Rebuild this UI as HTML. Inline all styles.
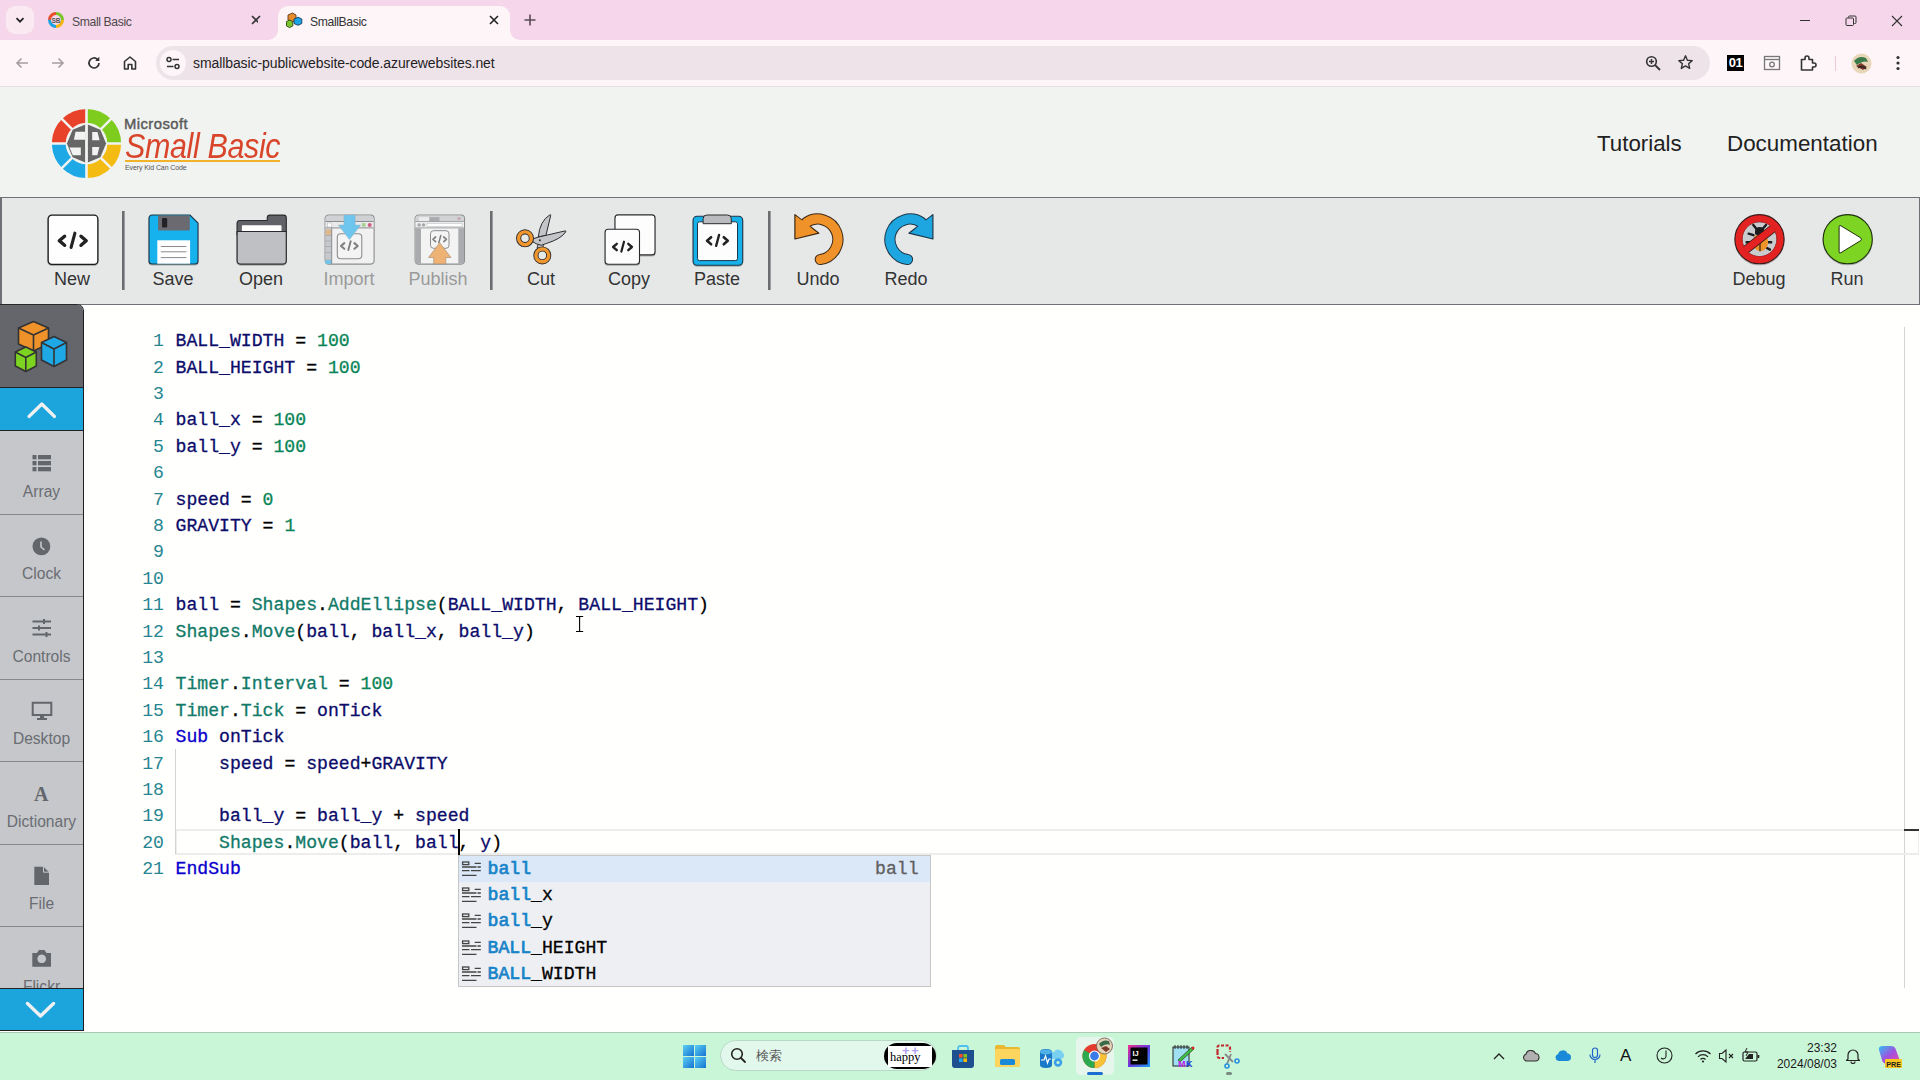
<!DOCTYPE html>
<html><head><meta charset="utf-8">
<style>
*{margin:0;padding:0;box-sizing:border-box}
html,body{width:1920px;height:1080px;overflow:hidden;background:#fffffe;font-family:"Liberation Sans",sans-serif}
.a{position:absolute}
#tabs{left:0;top:0;width:1920px;height:40px;background:#f6d6ea}
#bar{left:0;top:40px;width:1920px;height:47px;background:#fdf5f8;border-bottom:1px solid #e6dfe1}
#omni{left:156px;top:46px;width:1554px;height:34px;border-radius:17px;background:#efe3ea}
#hdr{left:0;top:87px;width:1920px;height:110px;background:#f1f3f1}
#tb{left:0;top:197px;width:1920px;height:108px;background:#e6e8e8;border:1px solid #6e7175;border-width:1px 1px 1px 2px}
.btn{position:absolute;top:214px;width:90px;text-align:center}
.lbl{position:absolute;top:269px;font-size:18px;color:#333;text-align:center;width:100px}
.sl{position:absolute;left:0;width:83px;text-align:center;color:#6a6d72;font-size:15.6px;line-height:18px}
#ed{left:84px;top:305px;width:1836px;height:726px;background:#fffffe}
.ln{position:absolute;left:120px;width:44px;text-align:right;font-family:"Liberation Mono",monospace;font-size:18.15px;color:#268590;line-height:26.4px;height:26.4px}
.cl{position:absolute;left:175.5px;font-family:"Liberation Mono",monospace;font-size:18.15px;color:#0c0c6a;line-height:26.4px;height:26.4px;white-space:pre;-webkit-text-stroke:0.3px currentColor}
.k{color:#0a00cc}.n{color:#0a8556}.t{color:#127a68}.p{color:#000}
</style></head><body>
<div id="tabs" class="a"></div>
<div id="bar" class="a"></div>
<div id="omni" class="a"></div>

<!-- chrome tabs -->
<div class="a" style="left:6px;top:6px;width:28px;height:28px;border-radius:9px;background:#fbe9f2"></div>
<svg class="a" style="left:14px;top:14px" width="12" height="12" viewBox="0 0 12 12"><path d="M2.5 4.2 L6 7.7 L9.5 4.2" fill="none" stroke="#222" stroke-width="1.7"/></svg>
<svg class="a" style="left:48px;top:12px" width="16" height="16" viewBox="0 0 16 16">
<circle cx="8" cy="8" r="6.5" fill="none" stroke="#e8502c" stroke-width="3" stroke-dasharray="10.2 30" transform="rotate(180 8 8)"/>
<circle cx="8" cy="8" r="6.5" fill="none" stroke="#7cc42b" stroke-width="3" stroke-dasharray="10.2 30" transform="rotate(270 8 8)"/>
<circle cx="8" cy="8" r="6.5" fill="none" stroke="#f5b50f" stroke-width="3" stroke-dasharray="10.2 30" transform="rotate(0 8 8)"/>
<circle cx="8" cy="8" r="6.5" fill="none" stroke="#1ba4e4" stroke-width="3" stroke-dasharray="10.2 30" transform="rotate(90 8 8)"/>
<text x="8" y="10.5" font-size="6.5" text-anchor="middle" fill="#555" font-family="Liberation Sans" font-weight="bold">SB</text>
</svg>
<div class="a" style="left:72px;top:14px;font-size:12.2px;color:#4e4a4c;line-height:16px;letter-spacing:-0.38px">Small Basic</div>
<svg class="a" style="left:250px;top:14px" width="12" height="12" viewBox="0 0 12 12"><path d="M2 2L10 10M10 2L2 10" stroke="#333" stroke-width="1.6"/></svg>
<!-- active tab -->
<div class="a" style="left:278px;top:6px;width:232px;height:40px;background:#fdf5f8;border-radius:10px 10px 0 0"></div>
<div class="a" style="left:268px;top:30px;width:10px;height:10px;background:#fdf5f8"></div>
<div class="a" style="left:258px;top:20px;width:20px;height:20px;background:#f6d6ea;border-radius:0 0 10px 0"></div>
<div class="a" style="left:510px;top:30px;width:10px;height:10px;background:#fdf5f8"></div>
<div class="a" style="left:510px;top:20px;width:20px;height:20px;background:#f6d6ea;border-radius:0 0 0 10px"></div>
<svg class="a" style="left:285px;top:11px" width="18" height="18" viewBox="0 0 18 18">
<path d="M3 4 L7.5 2 L11 4 L11 9 L6.5 11 L3 9Z" fill="#e98a2c" stroke="#5a3a1a" stroke-width="0.9"/>
<path d="M9 8 L13 6.2 L16.8 8 L16.8 12.5 L13 14.3 L9 12.5Z" fill="#1ba4e4" stroke="#1a3b5a" stroke-width="0.9"/>
<path d="M1.5 10.5 L4.5 9 L7.8 10.5 L7.8 15 L4.5 16.6 L1.5 15Z" fill="#7cc42b" stroke="#2a4a1a" stroke-width="0.9"/>
</svg>
<div class="a" style="left:310px;top:14px;font-size:12.2px;color:#333;line-height:16px;letter-spacing:-0.38px">SmallBasic</div>
<svg class="a" style="left:488px;top:14px" width="12" height="12" viewBox="0 0 12 12"><path d="M2 2L10 10M10 2L2 10" stroke="#222" stroke-width="1.6"/></svg>
<svg class="a" style="left:523px;top:13px" width="14" height="14" viewBox="0 0 14 14"><path d="M7 1.5V12.5M1.5 7H12.5" stroke="#5a4a55" stroke-width="1.6"/></svg>
<!-- window controls -->
<div class="a" style="left:1800px;top:20px;width:10px;height:1px;background:#333"></div>
<svg class="a" style="left:1844px;top:14px" width="14" height="14" viewBox="0 0 14 14"><rect x="2" y="4" width="7.5" height="7.5" rx="1" fill="none" stroke="#333" stroke-width="1"/><path d="M4.5 3.5V2.8A1 1 0 0 1 5.5 2H11A1 1 0 0 1 12 3V8.5A1 1 0 0 1 11 9.5H10.3" fill="none" stroke="#333" stroke-width="1"/></svg>
<svg class="a" style="left:1890px;top:14px" width="14" height="14" viewBox="0 0 14 14"><path d="M2 2L12 12M12 2L2 12" stroke="#333" stroke-width="1.1"/></svg>
<!-- toolbar icons -->
<svg class="a" style="left:14px;top:55px" width="16" height="16" viewBox="0 0 16 16"><path d="M14 8H3M7.5 3.5L3 8L7.5 12.5" fill="none" stroke="#a49ea1" stroke-width="1.6"/></svg>
<svg class="a" style="left:50px;top:55px" width="16" height="16" viewBox="0 0 16 16"><path d="M2 8H13M8.5 3.5L13 8L8.5 12.5" fill="none" stroke="#a49ea1" stroke-width="1.6"/></svg>
<svg class="a" style="left:86px;top:55px" width="16" height="16" viewBox="0 0 16 16"><path d="M13 8A5 5 0 1 1 11.5 4.4" fill="none" stroke="#333" stroke-width="1.7"/><path d="M13.3 1.8V6H9.1Z" fill="#333"/></svg>
<svg class="a" style="left:122px;top:55px" width="16" height="16" viewBox="0 0 16 16"><path d="M2.5 14V6.5L8 2L13.5 6.5V14H9.8V9.5H6.2V14Z" fill="none" stroke="#333" stroke-width="1.6" stroke-linejoin="round"/></svg>
<div class="a" style="left:160px;top:50px;width:26px;height:26px;border-radius:13px;background:#fdf5f8"></div>
<svg class="a" style="left:164px;top:54px" width="18" height="18" viewBox="0 0 18 18"><circle cx="5" cy="5.5" r="2" fill="none" stroke="#333" stroke-width="1.5"/><path d="M8.5 5.5H15" stroke="#333" stroke-width="1.5"/><circle cx="13" cy="12.5" r="2" fill="none" stroke="#333" stroke-width="1.5"/><path d="M3 12.5H9.5" stroke="#333" stroke-width="1.5"/></svg>
<div class="a" style="left:193px;top:54px;font-size:14px;color:#1f1f1f;line-height:18px;letter-spacing:-0.09px">smallbasic-publicwebsite-code.azurewebsites.net</div>
<svg class="a" style="left:1645px;top:55px" width="17" height="17" viewBox="0 0 17 17"><circle cx="6.5" cy="6.5" r="4.8" fill="none" stroke="#333" stroke-width="1.6"/><path d="M10 10L15 15" stroke="#333" stroke-width="1.8"/><path d="M6.5 4V9M4 6.5H9" stroke="#333" stroke-width="1.4"/></svg>
<svg class="a" style="left:1677px;top:54px" width="17" height="17" viewBox="0 0 17 17"><path d="M8.5 1.8L10.4 6.2L15.2 6.6L11.6 9.7L12.7 14.4L8.5 11.9L4.3 14.4L5.4 9.7L1.8 6.6L6.6 6.2Z" fill="none" stroke="#333" stroke-width="1.4" stroke-linejoin="round"/></svg>
<div class="a" style="left:1727px;top:55px;width:17px;height:16px;background:#000;color:#fff;font-size:13px;font-weight:bold;line-height:16px;text-align:center;letter-spacing:-0.5px">01</div>
<svg class="a" style="left:1763px;top:55px" width="18" height="16" viewBox="0 0 18 16"><rect x="1.5" y="1.5" width="15" height="13" fill="none" stroke="#777" stroke-width="1.3"/><path d="M1.5 4.5H16.5" stroke="#777" stroke-width="1.3"/><circle cx="9" cy="9.5" r="2.3" fill="none" stroke="#777" stroke-width="1.3"/></svg>
<svg class="a" style="left:1799px;top:54px" width="18" height="18" viewBox="0 0 18 18"><path d="M2.5 5.5H6V4A2 2 0 0 1 10 4V5.5H13.5V9H15A2 2 0 0 1 15 13H13.5V16H2.5Z" fill="none" stroke="#333" stroke-width="1.6" stroke-linejoin="round"/></svg>
<div class="a" style="left:1835px;top:56px;width:1px;height:15px;background:#f0c8dc"></div>
<svg class="a" style="left:1851px;top:53px" width="21" height="21" viewBox="0 0 21 21"><circle cx="10.5" cy="10.5" r="10" fill="#e9d6b8"/><path d="M3 8Q8 2 15 5L17 9Q12 7 6 12Z" fill="#3b7a4a"/><path d="M5 13L10 10L16 14L12 17Z" fill="#7a3a2a"/><path d="M7 15Q11 12 15 16" stroke="#222" stroke-width="1.2" fill="none"/></svg>
<svg class="a" style="left:1892px;top:55px" width="12" height="16" viewBox="0 0 12 16"><circle cx="6" cy="2.5" r="1.6" fill="#333"/><circle cx="6" cy="8" r="1.6" fill="#333"/><circle cx="6" cy="13.5" r="1.6" fill="#333"/></svg>

<div id="hdr" class="a"></div>

<svg class="a" style="left:52px;top:107px" width="72" height="74" viewBox="0 0 72 74">
<path d="M69.10 36.50A34.6 34.6 0 0 1 58.97 60.97L49.21 51.21A20.8 20.8 0 0 0 55.30 36.50Z" fill="#f4bb12"/><path d="M58.97 60.97A34.6 34.6 0 0 1 34.50 71.10L34.50 57.30A20.8 20.8 0 0 0 49.21 51.21Z" fill="#f4bb12"/><path d="M34.50 71.10A34.6 34.6 0 0 1 10.03 60.97L19.79 51.21A20.8 20.8 0 0 0 34.50 57.30Z" fill="#1ea8e6"/><path d="M10.03 60.97A34.6 34.6 0 0 1 -0.10 36.50L13.70 36.50A20.8 20.8 0 0 0 19.79 51.21Z" fill="#1ea8e6"/><path d="M-0.10 36.50A34.6 34.6 0 0 1 10.03 12.03L19.79 21.79A20.8 20.8 0 0 0 13.70 36.50Z" fill="#e8432a"/><path d="M10.03 12.03A34.6 34.6 0 0 1 34.50 1.90L34.50 15.70A20.8 20.8 0 0 0 19.79 21.79Z" fill="#e8432a"/><path d="M34.50 1.90A34.6 34.6 0 0 1 58.97 12.03L49.21 21.79A20.8 20.8 0 0 0 34.50 15.70Z" fill="#7dcc1e"/><path d="M58.97 12.03A34.6 34.6 0 0 1 69.10 36.50L55.30 36.50A20.8 20.8 0 0 0 49.21 21.79Z" fill="#7dcc1e"/><path d="M72.56 36.50L-3.56 36.50" stroke="#f1f3f1" stroke-width="2.6"/><path d="M61.41 63.41L7.59 9.59" stroke="#f1f3f1" stroke-width="2.6"/><path d="M34.50 74.56L34.50 -1.56" stroke="#f1f3f1" stroke-width="2.6"/><path d="M7.59 63.41L61.41 9.59" stroke="#f1f3f1" stroke-width="2.6"/>
<polygon points="54.10,36.50 48.36,50.36 34.50,56.10 20.64,50.36 14.90,36.50 20.64,22.64 34.50,16.90 48.36,22.64" fill="#666"/>
<path d="M33.1 16V57M35.9 16V57" stroke="#f1f3f1" stroke-width="0"/>
<rect x="33.1" y="16" width="2.8" height="41" fill="#f1f3f1"/>
<polygon points="23.5,24.7 33.1,24.7 33.1,32.8 21.9,32.8" fill="#f1f3f1"/>
<polygon points="17.5,40.5 28.8,40.5 28.8,48.3 20.8,48.3" fill="#f1f3f1"/>
<polygon points="40.2,25 45.5,25 47.6,33.3 40.2,33.3" fill="#f1f3f1"/>
<polygon points="40.2,40 47.4,40 45.3,48.3 40.2,48.3" fill="#f1f3f1"/>
</svg>
<div class="a" style="left:124px;top:115px;font-size:14.8px;color:#5a5a5a;line-height:18px;letter-spacing:0.45px;-webkit-text-stroke:0.45px #5a5a5a">Microsoft</div>
<div class="a" style="left:125px;top:126px;font-family:'Liberation Sans',sans-serif;font-style:italic;font-size:35px;color:#d9452a;line-height:40px;letter-spacing:-0.4px;transform:scaleX(0.87);transform-origin:0 0">Small Basic</div>
<div class="a" style="left:125px;top:160px;width:155px;height:2px;background:#f0b32a"></div>
<div class="a" style="left:125px;top:163px;font-size:7px;color:#555;line-height:9px;letter-spacing:-0.1px">Every Kid Can Code</div>
<div class="a" style="left:1597px;top:131px;font-size:22.3px;color:#212121;line-height:26px">Tutorials</div>
<div class="a" style="left:1727px;top:131px;font-size:22.4px;color:#212121;line-height:26px">Documentation</div>

<div id="tb" class="a"></div>
<svg class="a" style="left:0;top:197px" width="1920" height="108" viewBox="0 197 1920 108">
<defs>
<g id="code"><path d="M5.6 -4.6 L0.3 0 L5.6 4.5" fill="none" stroke="#222" stroke-width="3.4" stroke-linecap="round" stroke-linejoin="round"/><path d="M22 -4.6 L27.2 0 L22 4.5" fill="none" stroke="#222" stroke-width="3.4" stroke-linecap="round" stroke-linejoin="round"/><path d="M15.9 -7.6 L12.1 6.6" stroke="#222" stroke-width="3.1" stroke-linecap="round"/></g>
<filter id="sh" x="-10%" y="-10%" width="120%" height="130%"><feDropShadow dx="0" dy="1" stdDeviation="0.7" flood-color="#000" flood-opacity="0.25"/></filter>
</defs>
<!-- New -->
<g transform="translate(47.5 214.5)" filter="url(#sh)">
<rect x="0.65" y="0.65" width="49.7" height="49.2" rx="3.6" fill="#fefefe" stroke="#1a1a1a" stroke-width="1.3"/>
<use href="#code" transform="translate(11.5 26.3)"/>
</g>
<!-- Save -->
<g transform="translate(148.5 214.5)" filter="url(#sh)">
<path d="M3.5 0.5 H41.5 L49.5 8.5 V46.5 A3 3 0 0 1 46.5 49.5 H3.5 A3 3 0 0 1 0.5 46.5 V3.5 A3 3 0 0 1 3.5 0.5Z" fill="#17b2ee" stroke="#1d3748" stroke-width="1.1"/>
<path d="M9.6 1 H41.3 V14.5 A1.5 1.5 0 0 1 39.8 16 H11.1 A1.5 1.5 0 0 1 9.6 14.5Z" fill="#6b6b70"/>
<rect x="13.5" y="3.4" width="5.2" height="9.5" rx="1" fill="#232325"/>
<rect x="8.8" y="25.8" width="32.8" height="23.4" fill="#fff"/>
<path d="M12.3 32H37.9M12.3 37.3H37.9M12.3 43.1H37.9" stroke="#8a8a8a" stroke-width="1"/>
</g>
<!-- Open -->
<g transform="translate(236.5 214.5)" filter="url(#sh)">
<path d="M0.6 8.5 A2.5 2.5 0 0 1 3.1 6 H30.8 V3 A2.5 2.5 0 0 1 33.3 0.6 H47.3 A2.5 2.5 0 0 1 49.8 3 V20 H0.6Z" fill="#606268" stroke="#2b2b2e" stroke-width="1.1"/>
<rect x="5.4" y="10.8" width="39.6" height="7" rx="0.8" fill="#fff"/>
<path d="M0.6 17 H49.8 V46.5 A3 3 0 0 1 46.8 49.6 H3.6 A3 3 0 0 1 0.6 46.5Z" fill="#bfc0c4" stroke="#2b2b2e" stroke-width="1.2"/>
</g>
<!-- Import -->
<g transform="translate(324.5 214.5)">
<rect x="0.6" y="0.6" width="49" height="49" rx="3.5" fill="#f1f1f1" stroke="#8b8d90" stroke-width="1.1"/>
<path d="M1 4 A3 3 0 0 1 4 1 H46 A3 3 0 0 1 49 4 V7 H1Z" fill="#cfd1d4"/>
<path d="M1 7H49" stroke="#8b8d90" stroke-width="1"/>
<rect x="1" y="7.5" width="48" height="5.8" fill="#eaeaea"/>
<path d="M1 13.4H49" stroke="#8b8d90" stroke-width="1"/>
<rect x="3" y="8.5" width="4" height="4" fill="#fff" stroke="#b0b0b0" stroke-width="0.5"/>
<rect x="37.4" y="8.6" width="3.6" height="3.6" fill="#a9cf92"/>
<circle cx="45.2" cy="10.4" r="2" fill="#d05c80"/>
<rect x="1" y="13.8" width="6.2" height="35.2" fill="#c5c8cd"/>
<path d="M1 21H7.2M1 26.5H7.2M1 32H7.2M1 38H7.2M1 45.5H7.2" stroke="#9a9da2" stroke-width="0.6"/>
<rect x="1" y="45.8" width="6.2" height="3.5" fill="#6cc3e8"/>
<rect x="1.2" y="15" width="5.5" height="5.5" fill="#e8b070" opacity="0.7"/>
<path d="M7.2 13.4V49.4" stroke="#8b8d90" stroke-width="1"/>
<rect x="12.8" y="19.2" width="24.5" height="25" rx="3.5" fill="#f4f4f4" stroke="#8b8d90" stroke-width="1.1"/>
<g transform="translate(25 31.5) scale(0.62)"><use href="#code" transform="translate(-14 0)" style="opacity:0.55"/></g>
<path d="M19.5 0.6 H30.6 V10.6 H36 L25 25 L14 10.6 H19.5Z" fill="#6ec6ee" stroke="#8ab4c8" stroke-width="0.6"/>
</g>
<!-- Publish -->
<g transform="translate(414.5 214.5)">
<rect x="0.6" y="0.6" width="49.4" height="49" rx="3.5" fill="#f3f3f3" stroke="#8b8d90" stroke-width="1.1"/>
<path d="M1 4 A3 3 0 0 1 4 1 H46.5 A3 3 0 0 1 49.5 4 V7 H1Z" fill="#d0d2d4"/>
<rect x="4.4" y="2.6" width="10.4" height="4.4" fill="#ececec"/>
<rect x="14.8" y="2.6" width="10.2" height="4.4" fill="#a9abaf"/>
<circle cx="44.5" cy="4" r="1.6" fill="#c9a8b0"/>
<path d="M1 7H49.5" stroke="#8b8d90" stroke-width="0.8"/>
<rect x="1" y="7.4" width="48.5" height="6" fill="#ededed"/>
<circle cx="4.6" cy="10.4" r="1.7" fill="#a6a8ac"/><circle cx="9" cy="10.4" r="1.7" fill="#a6a8ac"/>
<rect x="12.5" y="9.2" width="35" height="2.6" fill="#fff" stroke="#b8babd" stroke-width="0.5"/>
<path d="M1 13.4H49.5" stroke="#8b8d90" stroke-width="0.8"/>
<rect x="1" y="13.8" width="5.5" height="35.3" fill="#a9abae"/>
<rect x="43.8" y="13.8" width="5.7" height="35.3" fill="#a9abae"/>
<rect x="16" y="16.2" width="18.5" height="17.6" rx="3" fill="#f4f4f4" stroke="#8b8d90" stroke-width="1"/>
<g transform="translate(25.3 24.8) scale(0.5)"><use href="#code" transform="translate(-14 0)" style="opacity:0.55"/></g>
<path d="M25.2 28.2 L36.5 43 H31.3 V49.4 H19.2 V43 H14Z" fill="#eeb275" stroke="#a08a70" stroke-width="0.6"/>
</g>
<!-- Cut -->
<g transform="translate(516.3 214.3)">
<path d="M21.8 29.5 L20.8 33.5 L27 34 L26.8 29Z" fill="#c4c5c9" stroke="#2b2b2e" stroke-width="0.9" stroke-linejoin="round"/>
<path d="M22 22.6 Q23.5 6.5 33.8 0.4 Q34.6 0.2 34.4 1.2 L29.6 21.2 Z" fill="#c4c5c9" stroke="#2b2b2e" stroke-width="1" stroke-linejoin="round"/>
<path d="M16.5 24.5 L23 22.6 L48.8 16.6 Q50 16.6 49.4 17.6 Q45 24.5 30 29.2 L25 31 Q20 30 16.5 27.5Z" fill="#c4c5c9" stroke="#2b2b2e" stroke-width="1" stroke-linejoin="round"/>
<circle cx="8.7" cy="24" r="6.4" fill="none" stroke="#2b2b2e" stroke-width="5.2"/>
<circle cx="8.7" cy="24" r="6.4" fill="none" stroke="#f0962c" stroke-width="3.4"/>
<circle cx="26" cy="41.1" r="6.4" fill="none" stroke="#2b2b2e" stroke-width="5.2"/>
<circle cx="26" cy="41.1" r="6.4" fill="none" stroke="#f0962c" stroke-width="3.4"/>
<circle cx="23.6" cy="26" r="1" fill="#2b2b2e"/>
</g>
<!-- Copy -->
<g transform="translate(604.5 214.3)" filter="url(#sh)">
<rect x="10.5" y="0.6" width="40" height="40" rx="3" fill="#fdfdfd" stroke="#2b2b2e" stroke-width="1.1"/>
<rect x="0.6" y="15" width="34.4" height="35" rx="3" fill="#fdfdfd" stroke="#2b2b2e" stroke-width="1.1"/>
<g transform="translate(18 32.7) scale(0.7)"><use href="#code" transform="translate(-13.75 0)"/></g>
</g>
<!-- Paste -->
<g transform="translate(692.5 214.3)" filter="url(#sh)">
<rect x="0.6" y="2" width="49.6" height="49" rx="4" fill="#18b0ea" stroke="#1d3748" stroke-width="1.1"/>
<rect x="5" y="7.5" width="40" height="38.8" rx="2" fill="#fdfdfd" stroke="#1d3748" stroke-width="1"/>
<path d="M10.6 9.4 V4.5 A3.8 3.8 0 0 1 14.4 0.7 H35 A3.8 3.8 0 0 1 38.8 4.5 V9.4 Z" fill="#b9bbbf" stroke="#2b2b2e" stroke-width="1"/>
<g transform="translate(24.9 26.5) scale(0.77)"><use href="#code" transform="translate(-13.75 0)"/></g>
</g>
<!-- Undo -->
<g transform="translate(794.3 214)">
<path d="M12 8.5 A20.3 20.3 0 1 1 26 45.5" fill="none" stroke="#3d2a18" stroke-width="11.2" stroke-linecap="round"/>
<polygon points="0.6,0.6 0.6,25 24.6,19.2" fill="#f0922a" stroke="#3d2a18" stroke-width="1.2" stroke-linejoin="round"/>
<path d="M12 8.5 A20.3 20.3 0 1 1 26 45.5" fill="none" stroke="#f0922a" stroke-width="9.2" stroke-linecap="round"/>
<polygon points="2,2.5 1.8,23.5 21,18.2 14,11" fill="#f0922a"/>
</g>
<!-- Redo -->
<g transform="translate(933.5 214) scale(-1 1)">
<path d="M12 8.5 A20.3 20.3 0 1 1 26 45.5" fill="none" stroke="#1d3748" stroke-width="11.2" stroke-linecap="round"/>
<polygon points="0.6,0.6 0.6,25 24.6,19.2" fill="#1ea6e0" stroke="#1d3748" stroke-width="1.2" stroke-linejoin="round"/>
<path d="M12 8.5 A20.3 20.3 0 1 1 26 45.5" fill="none" stroke="#1ea6e0" stroke-width="9.2" stroke-linecap="round"/>
<polygon points="2,2.5 1.8,23.5 21,18.2 14,11" fill="#1ea6e0"/>
</g>
<!-- Debug -->
<clipPath id="dclip"><circle cx="0" cy="0" r="18"/></clipPath>
<g transform="translate(1759.5 239.2)" filter="url(#sh)">
<circle r="24.6" fill="#e52323" stroke="#3a1a1a" stroke-width="1.1"/>
<circle r="17.4" fill="#c9cbce" stroke="#3a1a1a" stroke-width="0.8"/>
<path d="M-2 -9 L-6.2 -14.2 M2 -9 L6.5 -14.2 M-6 -4 L-10.9 -5.5 M6 3 L11.7 3 M-7 3 L-12.9 3 M6 8 L10.5 10.4" stroke="#1c1c1c" stroke-width="2.4" stroke-linecap="round"/>
<ellipse cx="1" cy="3" rx="7.6" ry="9" fill="#f0952a"/>
<path d="M-4.5 -8.2 A4.8 4.8 0 0 1 5 -8.2 L5 -5 Q0 -3 -4.5 -5Z" fill="#1c1c1c"/>
<path d="M0.5 -4 V12" stroke="#3a2a1a" stroke-width="1.3"/>
<g clip-path="url(#dclip)">
<path d="M16 -12.6 L-16 12.4" stroke="#3a1a1a" stroke-width="8.6"/>
<path d="M16 -12.6 L-16 12.4" stroke="#e52323" stroke-width="7"/>
</g>
<circle r="17.6" fill="none" stroke="#e52323" stroke-width="0.9"/>
<path d="M13.5 -7.5 L-7.5 9" stroke="none"/>
</g>
<!-- Run -->
<g transform="translate(1847.7 239.2)" filter="url(#sh)">
<circle r="24.6" fill="#7dd420" stroke="#1f3010" stroke-width="1.1"/>
<path d="M-8.6 -12.5 Q-8.6 -14.5 -6.8 -13.4 L13 -1.4 Q14.5 0 13 1.4 L-6.8 13.5 Q-8.6 14.6 -8.6 12.5Z" fill="#fff" stroke="#1f3010" stroke-width="1"/>
</g>
<!-- separators -->
<rect x="122" y="211" width="2.6" height="79" fill="#6b6d70"/>
<rect x="490" y="211" width="2.6" height="79" fill="#6b6d70"/>
<rect x="768" y="211" width="2.6" height="79" fill="#6b6d70"/>
</svg>
<div class="lbl" style="left:22px">New</div>
<div class="lbl" style="left:123px">Save</div>
<div class="lbl" style="left:211px">Open</div>
<div class="lbl" style="left:299px;color:#9a9a9a">Import</div>
<div class="lbl" style="left:388px;color:#9a9a9a">Publish</div>
<div class="lbl" style="left:491px">Cut</div>
<div class="lbl" style="left:579px">Copy</div>
<div class="lbl" style="left:667px">Paste</div>
<div class="lbl" style="left:768px">Undo</div>
<div class="lbl" style="left:856px">Redo</div>
<div class="lbl" style="left:1709px">Debug</div>
<div class="lbl" style="left:1797px">Run</div>

<div class="a" style="left:0;top:304px;width:84px;height:727px;background:#c5c7cb;border-right:1px solid #1e1e1e;border-top:1px solid #2a2a2a;border-top-right-radius:7px;overflow:hidden">
<div class="a" style="left:0;top:0;width:83px;height:83px;background:#64666c;border-bottom:1px solid #222"></div>
<div class="a" style="left:0;top:83px;width:83px;height:43px;background:#1ba5dc;border-bottom:1px solid #222"></div>
<div class="a" style="left:0;top:209px;width:83px;height:1px;background:#85888d"></div>
<div class="a" style="left:0;top:291px;width:83px;height:1px;background:#85888d"></div>
<div class="a" style="left:0;top:374px;width:83px;height:1px;background:#85888d"></div>
<div class="a" style="left:0;top:456px;width:83px;height:1px;background:#85888d"></div>
<div class="a" style="left:0;top:539px;width:83px;height:1px;background:#85888d"></div>
<div class="a" style="left:0;top:621px;width:83px;height:1px;background:#85888d"></div>
<div class="sl" style="top:178px">Array</div>
<div class="sl" style="top:260px">Clock</div>
<div class="sl" style="top:343px">Controls</div>
<div class="sl" style="top:425px">Desktop</div>
<div class="sl" style="top:508px">Dictionary</div>
<div class="sl" style="top:590px">File</div>
<div class="sl" style="top:673px">Flickr</div>
<div class="a" style="left:0;top:683px;width:83px;height:43px;background:#1ba5dc;border-top:1px solid #222;border-bottom:1px solid #222"></div>
</div>
<svg class="a" style="left:0;top:305px" width="84" height="726" viewBox="0 305 84 726">
<g stroke="#333" stroke-width="1.6" stroke-linejoin="round">
<path d="M33.5 321.5 L48.5 328 L48.5 344 L33.5 351 L18.5 344 L18.5 328Z" fill="#f0922a"/>
<path d="M18.5 328 L33.5 335 L48.5 328 M33.5 335 V351" fill="none"/>
<path d="M54 336.5 L66.5 342.5 L66.5 360 L54 366.5 L41.5 360 L41.5 342.5Z" fill="#1ea8e6"/>
<path d="M41.5 342.5 L54 349 L66.5 342.5 M54 349 V366.5" fill="none"/>
<path d="M25.8 347 L36.3 352 L36.3 366 L25.8 371.5 L15.3 366 L15.3 352Z" fill="#7dd420"/>
<path d="M15.3 352 L25.8 357.5 L36.3 352 M25.8 357.5 V371.5" fill="none"/>
</g>
<path d="M29 416.5 L41.8 404 L54.5 416.5" fill="none" stroke="#eef0f2" stroke-width="3.2" stroke-linecap="round" stroke-linejoin="round"/>
<path d="M27.5 1003.5 L40.5 1016 L53.5 1003.5" fill="none" stroke="#eef0f2" stroke-width="3.4" stroke-linecap="round" stroke-linejoin="round"/>
<g fill="#63666b">
<!-- array -->
<rect x="32.5" y="455" width="4" height="4.3"/><rect x="38" y="455" width="13" height="4.3"/>
<rect x="32.5" y="461" width="4" height="4.3"/><rect x="38" y="461" width="13" height="4.3"/>
<rect x="32.5" y="467" width="4" height="4.3"/><rect x="38" y="467" width="13" height="4.3"/>
<!-- clock -->
<circle cx="41.4" cy="546.4" r="8.9"/>
</g>
<path d="M41 541.5 V547 L44.5 550" fill="none" stroke="#c5c7cb" stroke-width="1.6"/>
<g stroke="#63666b" stroke-width="2">
<path d="M32.5 621.5 H51 M32.5 628 H51 M32.5 634.5 H51"/>
</g>
<g fill="#63666b">
<rect x="43" y="619" width="2" height="5"/><rect x="38" y="625.5" width="2" height="5"/><rect x="45.5" y="632" width="2" height="5"/>
<!-- desktop -->
<path d="M31.7 701.7 H52.3 V716 H44 V718 H47 V720 H37 V718 H40 V716 H31.7Z M33.7 703.7 V714 H50.3 V703.7Z" fill-rule="evenodd"/>
<!-- file -->
<path d="M34.3 866.7 H43.5 L49 872.2 V885 H34.3Z"/>
<!-- camera -->
<path d="M32.3 953 H37 L39 950 H44.5 L46.5 953 H51 V966.7 H32.3Z M41.7 954.5 A4.3 4.3 0 1 0 41.71 954.5Z" fill-rule="evenodd"/>
</g>
<path d="M43.5 866.7 V872.2 H49" fill="none" stroke="#c5c7cb" stroke-width="1"/>
<circle cx="41.7" cy="959" r="3" fill="none" stroke="#c5c7cb" stroke-width="1.6"/>
<text x="41.3" y="800.7" font-family="Liberation Serif" font-weight="bold" font-size="20" text-anchor="middle" fill="#63666b">A</text>
</svg>

<div id="ed" class="a"></div>
<div class="ln" style="top:328.2px">1</div>
<div class="cl" style="top:328.2px"><span>BALL_WIDTH</span> <span class="p">=</span> <span class="n">100</span></div>
<div class="ln" style="top:354.6px">2</div>
<div class="cl" style="top:354.6px"><span>BALL_HEIGHT</span> <span class="p">=</span> <span class="n">100</span></div>
<div class="ln" style="top:381.0px">3</div>
<div class="ln" style="top:407.4px">4</div>
<div class="cl" style="top:407.4px">ball_x <span class="p">=</span> <span class="n">100</span></div>
<div class="ln" style="top:433.8px">5</div>
<div class="cl" style="top:433.8px">ball_y <span class="p">=</span> <span class="n">100</span></div>
<div class="ln" style="top:460.2px">6</div>
<div class="ln" style="top:486.6px">7</div>
<div class="cl" style="top:486.6px">speed <span class="p">=</span> <span class="n">0</span></div>
<div class="ln" style="top:513.0px">8</div>
<div class="cl" style="top:513.0px">GRAVITY <span class="p">=</span> <span class="n">1</span></div>
<div class="ln" style="top:539.4px">9</div>
<div class="ln" style="top:565.8px">10</div>
<div class="ln" style="top:592.2px">11</div>
<div class="cl" style="top:592.2px">ball <span class="p">=</span> <span class="t">Shapes</span><span class="p">.</span><span class="t">AddEllipse</span><span class="p">(</span>BALL_WIDTH<span class="p">,</span> BALL_HEIGHT<span class="p">)</span></div>
<div class="ln" style="top:618.6px">12</div>
<div class="cl" style="top:618.6px"><span class="t">Shapes</span><span class="p">.</span><span class="t">Move</span><span class="p">(</span>ball<span class="p">,</span> ball_x<span class="p">,</span> ball_y<span class="p">)</span></div>
<div class="ln" style="top:645.0px">13</div>
<div class="ln" style="top:671.4px">14</div>
<div class="cl" style="top:671.4px"><span class="t">Timer</span><span class="p">.</span><span class="t">Interval</span> <span class="p">=</span> <span class="n">100</span></div>
<div class="ln" style="top:697.8px">15</div>
<div class="cl" style="top:697.8px"><span class="t">Timer</span><span class="p">.</span><span class="t">Tick</span> <span class="p">=</span> onTick</div>
<div class="ln" style="top:724.2px">16</div>
<div class="cl" style="top:724.2px"><span class="k">Sub</span> onTick</div>
<div class="ln" style="top:750.6px">17</div>
<div class="cl" style="top:750.6px">    speed <span class="p">=</span> speed<span class="p">+</span>GRAVITY</div>
<div class="ln" style="top:777.0px">18</div>
<div class="ln" style="top:803.4px">19</div>
<div class="cl" style="top:803.4px">    ball_y <span class="p">=</span> ball_y <span class="p">+</span> speed</div>
<div class="ln" style="top:829.8px">20</div>
<div class="cl" style="top:829.8px">    <span class="t">Shapes</span><span class="p">.</span><span class="t">Move</span><span class="p">(</span>ball<span class="p">,</span> ball<span class="p">,</span> y<span class="p">)</span></div>
<div class="ln" style="top:856.2px">21</div>
<div class="cl" style="top:856.2px"><span class="k">EndSub</span></div>
<div class="a" style="left:1904px;top:327px;width:1px;height:661px;background:#d4d4d4"></div>
<div class="a" style="left:175px;top:829px;width:1744px;height:26px;border:2px solid #ededed;border-right-width:1px"></div>
<div class="a" style="left:175px;top:749px;width:1px;height:105px;background:#d3d3d3"></div>
<div class="a" style="left:1904px;top:829px;width:15px;height:2px;background:#333"></div>
<div class="a" style="left:458px;top:829px;width:2px;height:26px;background:#000"></div>
<svg class="a" style="left:574px;top:614px" width="12" height="20" viewBox="0 0 12 20"><path d="M2 2.5H5.2Q5.6 2.8 5.6 4V16Q5.6 17.2 5.2 17.5H2M9.2 2.5H6Q5.6 2.8 5.6 4V16Q5.6 17.2 6 17.5H9.2" fill="none" stroke="#000" stroke-width="1.1"/></svg>
<div class="a" style="left:458px;top:855px;width:473px;height:132px;background:#eeeff2;border:1px solid #c6c6c6"></div>
<div class="a" style="left:459px;top:856px;width:471px;height:26px;background:#dbe8f7"></div>

<svg class="a" style="left:461px;top:860.5px" width="21" height="17" viewBox="0 0 21 17"><g stroke="#444" stroke-width="1.3" fill="none"><rect x="1.6" y="1" width="6.2" height="2.6"/><path d="M13.7 2.3H19.8M1 6H15.5M16.5 6H19.8M1 9.7H8.5M10 9.7H19.8M1 14.3H15.5"/></g></svg>
<div class="cl" style="left:487.5px;top:855.5px;color:#000"><span style="color:#1783c9;-webkit-text-stroke:0.7px #1783c9">ball</span></div>
<svg class="a" style="left:461px;top:886.9px" width="21" height="17" viewBox="0 0 21 17"><g stroke="#444" stroke-width="1.3" fill="none"><rect x="1.6" y="1" width="6.2" height="2.6"/><path d="M13.7 2.3H19.8M1 6H15.5M16.5 6H19.8M1 9.7H8.5M10 9.7H19.8M1 14.3H15.5"/></g></svg>
<div class="cl" style="left:487.5px;top:881.9px;color:#000"><span style="color:#1783c9;-webkit-text-stroke:0.7px #1783c9">ball</span>_x</div>
<svg class="a" style="left:461px;top:913.3px" width="21" height="17" viewBox="0 0 21 17"><g stroke="#444" stroke-width="1.3" fill="none"><rect x="1.6" y="1" width="6.2" height="2.6"/><path d="M13.7 2.3H19.8M1 6H15.5M16.5 6H19.8M1 9.7H8.5M10 9.7H19.8M1 14.3H15.5"/></g></svg>
<div class="cl" style="left:487.5px;top:908.3px;color:#000"><span style="color:#1783c9;-webkit-text-stroke:0.7px #1783c9">ball</span>_y</div>
<svg class="a" style="left:461px;top:939.7px" width="21" height="17" viewBox="0 0 21 17"><g stroke="#444" stroke-width="1.3" fill="none"><rect x="1.6" y="1" width="6.2" height="2.6"/><path d="M13.7 2.3H19.8M1 6H15.5M16.5 6H19.8M1 9.7H8.5M10 9.7H19.8M1 14.3H15.5"/></g></svg>
<div class="cl" style="left:487.5px;top:934.7px;color:#000"><span style="color:#1783c9;-webkit-text-stroke:0.7px #1783c9">BALL</span>_HEIGHT</div>
<svg class="a" style="left:461px;top:966.1px" width="21" height="17" viewBox="0 0 21 17"><g stroke="#444" stroke-width="1.3" fill="none"><rect x="1.6" y="1" width="6.2" height="2.6"/><path d="M13.7 2.3H19.8M1 6H15.5M16.5 6H19.8M1 9.7H8.5M10 9.7H19.8M1 14.3H15.5"/></g></svg>
<div class="cl" style="left:487.5px;top:961.1px;color:#000"><span style="color:#1783c9;-webkit-text-stroke:0.7px #1783c9">BALL</span>_WIDTH</div>
<div class="cl" style="left:875px;top:855.5px;color:#5f5f5f">ball</div>
<div class="a" style="left:0;top:1032px;width:1920px;height:48px;background:#caf6d8;border-top:1px solid #a9c9b5"></div>
<!-- start -->
<svg class="a" style="left:683px;top:1044.5px" width="24" height="24" viewBox="0 0 24 24">
<defs><linearGradient id="wg" x1="0" y1="0" x2="1" y2="1"><stop offset="0" stop-color="#5ad0f5"/><stop offset="1" stop-color="#1572d0"/></linearGradient></defs>
<rect x="0" y="0" width="11" height="11" fill="url(#wg)"/><rect x="12" y="0" width="11" height="11" fill="url(#wg)"/>
<rect x="0" y="12" width="11" height="11" fill="url(#wg)"/><rect x="12" y="12" width="11" height="11" fill="url(#wg)"/>
</svg>
<!-- search -->
<div class="a" style="left:720px;top:1040px;width:217px;height:31px;border-radius:16px;background:#e3f8ec;border:1px solid #b8d9c6"></div>
<svg class="a" style="left:730px;top:1047px" width="17" height="17" viewBox="0 0 17 17"><circle cx="7" cy="7" r="5.3" fill="none" stroke="#222" stroke-width="1.6"/><path d="M11 11L15 15" stroke="#222" stroke-width="1.8" stroke-linecap="round"/></svg>
<div class="a" style="left:756px;top:1047px;font-size:13px;color:#5a5a5a;line-height:17px">検索</div>
<div class="a" style="left:884px;top:1043px;width:52px;height:26px;border-radius:13px;background:#000"></div>
<div class="a" style="left:888px;top:1046px;width:44px;height:21px;background:#fff"></div>
<div class="a" style="left:902px;top:1045px;font-size:13px;color:#b0a0f0;line-height:12px;font-weight:bold;letter-spacing:-1px">+ +</div>
<div class="a" style="left:890px;top:1050px;font-family:'Liberation Serif',serif;font-size:12.5px;color:#000;line-height:14px">happy</div>
<!-- store -->
<svg class="a" style="left:951px;top:1044px" width="24" height="25" viewBox="0 0 24 25">
<path d="M7 6V4A2 2 0 0 1 9 2H15A2 2 0 0 1 17 4V6" fill="none" stroke="#50c0f0" stroke-width="1.8"/>
<path d="M1 6H23V21A3 3 0 0 1 20 24H4A3 3 0 0 1 1 21Z" fill="#1e4f8e"/>
<rect x="8" y="10" width="3.6" height="3.6" fill="#f05030"/><rect x="12.4" y="10" width="3.6" height="3.6" fill="#80c020"/>
<rect x="8" y="14.4" width="3.6" height="3.6" fill="#20a8f0"/><rect x="12.4" y="14.4" width="3.6" height="3.6" fill="#f8b800"/>
</svg>
<!-- explorer -->
<svg class="a" style="left:995px;top:1044px" width="25" height="23" viewBox="0 0 25 23">
<path d="M0 3A2 2 0 0 1 2 1H9L11 3H23A2 2 0 0 1 25 5V21A2 2 0 0 1 23 23H2A2 2 0 0 1 0 21Z" fill="#e8b830"/>
<rect x="0" y="5" width="25" height="18" rx="1.5" fill="#fcd55e"/>
<rect x="5" y="15" width="15" height="6" rx="1.5" fill="#1a8ad8"/>
</svg>
<!-- azure -->
<svg class="a" style="left:1039px;top:1044px" width="25" height="24" viewBox="0 0 25 24">
<path d="M15 8A5 5 0 0 1 24 9A3.5 3.5 0 0 1 21 15H13A3 3 0 0 1 15 8Z" fill="#7ad0f0"/>
<path d="M1 8Q1 5 7 5Q13 5 13 8V21Q13 24 7 24Q1 24 1 21Z" fill="#1a78c8"/>
<ellipse cx="7" cy="8" rx="6" ry="2.5" fill="#50b0e8"/>
<path d="M2 16H5L6.5 12L8.5 19L10 15H12" fill="none" stroke="#fff" stroke-width="1.2"/>
<circle cx="19" cy="18.5" r="4.2" fill="#3aa0e8"/><circle cx="19" cy="18.5" r="1.6" fill="#caf6d8"/>
</svg>
<!-- chrome -->
<div class="a" style="left:1076px;top:1037px;width:38px;height:38px;border-radius:5px;background:#e6f6ec"></div>
<svg class="a" style="left:1082px;top:1043px" width="26" height="26" viewBox="0 0 26 26">
<circle cx="12.5" cy="13" r="12" fill="#e33b2e"/>
<path d="M12.5 13 L22.9 7 A12 12 0 0 1 12.5 25Z" fill="#f7c235"/>
<path d="M12.5 13 L12.5 25 A12 12 0 0 1 2.1 7Z" fill="#2da94f"/>
<circle cx="12.5" cy="13" r="5.6" fill="#fff"/><circle cx="12.5" cy="13" r="4.4" fill="#3b7be8"/>
</svg>
<svg class="a" style="left:1096px;top:1037px" width="17" height="18" viewBox="0 0 17 18"><circle cx="8.5" cy="9" r="8" fill="#e3d3b8" stroke="#6a5a4a" stroke-width="0.8"/><path d="M3 7Q7 2 13 4L14 8Q10 6 5 10Z" fill="#3b6a4a"/><path d="M5 11L10 9L14 12L10 15Z" fill="#7a3a2a"/></svg>
<div class="a" style="left:1087px;top:1072px;width:16px;height:3px;border-radius:2px;background:#1c6fd0"></div>
<!-- intellij -->
<svg class="a" style="left:1128px;top:1045px" width="22" height="22" viewBox="0 0 22 22">
<defs><linearGradient id="ij" x1="0" y1="0" x2="1" y2="1"><stop offset="0" stop-color="#f2308f"/><stop offset="0.5" stop-color="#6a38e0"/><stop offset="1" stop-color="#18a0f8"/></linearGradient></defs>
<rect x="0" y="0" width="22" height="22" fill="url(#ij)"/><rect x="2.5" y="2.5" width="17" height="17" fill="#000"/>
<text x="4.5" y="10.5" font-family="Liberation Sans" font-weight="bold" font-size="7.5" fill="#fff">IJ</text>
<rect x="4.5" y="14.5" width="5" height="1.3" fill="#fff"/>
</svg>
<!-- notepad MK -->
<svg class="a" style="left:1172px;top:1044px" width="24" height="24" viewBox="0 0 24 24">
<rect x="1" y="3" width="16" height="19" fill="#9fe0f0" stroke="#222" stroke-width="1"/>
<path d="M3 1V5M6 1V5M9 1V5M12 1V5M15 1V5" stroke="#222" stroke-width="0.9"/>
<path d="M6 16L20 3L22 5L8 18Z" fill="#40c040" stroke="#222" stroke-width="0.6"/>
<circle cx="21" cy="4" r="1.5" fill="#e02020"/>
<text x="6" y="23" font-family="Liberation Sans" font-weight="bold" font-size="9" fill="#c020e0">M</text>
<text x="14" y="23" font-family="Liberation Sans" font-weight="bold" font-size="9" fill="#2040e0">K</text>
</svg>
<!-- snipping -->
<svg class="a" style="left:1216px;top:1044px" width="25" height="25" viewBox="0 0 25 25">
<path d="M1.5 8V3A2 2 0 0 1 3.5 1.5H12A2 2 0 0 1 14 3.5V8M1.5 8V12A2 2 0 0 0 3.5 14H8" fill="none" stroke="#c02a2a" stroke-width="2.2" stroke-dasharray="3 1.5"/>
<path d="M9 10L17 18M15 10L11 20" stroke="#888" stroke-width="1.8"/>
<circle cx="11" cy="22" r="2" fill="none" stroke="#2a90e0" stroke-width="1.6"/><circle cx="21" cy="17" r="2" fill="none" stroke="#2a90e0" stroke-width="1.6"/>
</svg>
<div class="a" style="left:1226px;top:1072px;width:6px;height:3px;border-radius:2px;background:#7a8a80"></div>
<!-- tray -->
<svg class="a" style="left:1492px;top:1051px" width="14" height="10" viewBox="0 0 14 10"><path d="M2 8L7 3L12 8" fill="none" stroke="#222" stroke-width="1.3"/></svg>
<svg class="a" style="left:1522px;top:1050px" width="18" height="12" viewBox="0 0 18 12"><path d="M4.5 11A3.5 3.5 0 0 1 4 4.2A5 5 0 0 1 13.5 3.5A3.8 3.8 0 0 1 14 11Z" fill="#b0b0b0" stroke="#333" stroke-width="1.1"/></svg>
<svg class="a" style="left:1554px;top:1050px" width="18" height="12" viewBox="0 0 18 12"><path d="M4.5 11A3.5 3.5 0 0 1 4 4.2A5 5 0 0 1 13.5 3.5A3.8 3.8 0 0 1 14 11Z" fill="#1a8ad8"/></svg>
<svg class="a" style="left:1588px;top:1047px" width="14" height="17" viewBox="0 0 14 17"><rect x="4.5" y="1" width="5" height="9.5" rx="2.5" fill="none" stroke="#1f62c8" stroke-width="1.2"/><path d="M2 7.5A5 5 0 0 0 12 7.5M7 12.5V16" fill="none" stroke="#1f62c8" stroke-width="1.2"/></svg>
<div class="a" style="left:1620px;top:1047px;font-size:17px;color:#111;line-height:18px">A</div>
<svg class="a" style="left:1656px;top:1047px" width="18" height="18" viewBox="0 0 18 18"><circle cx="8.5" cy="8.5" r="7.5" fill="none" stroke="#222" stroke-width="1.1"/><path d="M10 3.5V9.5A3 3 0 0 1 5 11" fill="none" stroke="#222" stroke-width="1.1"/></svg>
<svg class="a" style="left:1694px;top:1049px" width="18" height="14" viewBox="0 0 18 14"><path d="M1.5 5A10.5 10.5 0 0 1 16.5 5M4 7.8A7 7 0 0 1 14 7.8M6.5 10.5A3.5 3.5 0 0 1 11.5 10.5" fill="none" stroke="#222" stroke-width="1.2"/><circle cx="9" cy="12.5" r="1.1" fill="#222"/></svg>
<svg class="a" style="left:1718px;top:1048px" width="18" height="16" viewBox="0 0 18 16"><path d="M1.5 5.5H4L8 2V14L4 10.5H1.5Z" fill="none" stroke="#222" stroke-width="1.1"/><path d="M11 6L15 10M15 6L11 10" stroke="#222" stroke-width="1.1"/></svg>
<svg class="a" style="left:1742px;top:1047px" width="19" height="16" viewBox="0 0 19 16"><rect x="1" y="5" width="14" height="9" rx="1.5" fill="none" stroke="#222" stroke-width="1.2"/><rect x="15.5" y="8" width="1.8" height="3" fill="#222"/><path d="M3 12H11V7H7Z" fill="#222"/><path d="M5 1L3 5H6L4 9" fill="none" stroke="#222" stroke-width="1"/></svg>
<div class="a" style="left:1780px;top:1041px;width:57px;text-align:right;font-size:12px;color:#1a1a1a;line-height:14px">23:32</div>
<div class="a" style="left:1770px;top:1057px;width:67px;text-align:right;font-size:12px;color:#1a1a1a;line-height:14px">2024/08/03</div>
<svg class="a" style="left:1845px;top:1048px" width="16" height="16" viewBox="0 0 16 16"><path d="M3 11V7A5 5 0 0 1 13 7V11L14.5 12.5H1.5Z" fill="none" stroke="#222" stroke-width="1.2" stroke-linejoin="round"/><path d="M6 13.5A2 2 0 0 0 10 13.5" fill="none" stroke="#222" stroke-width="1.2"/></svg>
<svg class="a" style="left:1877px;top:1045px" width="25" height="23" viewBox="0 0 25 23">
<defs><linearGradient id="cp" x1="0" y1="0" x2="1" y2="1"><stop offset="0" stop-color="#30c0f0"/><stop offset="0.5" stop-color="#a050e0"/><stop offset="1" stop-color="#f050a0"/></linearGradient></defs>
<path d="M6 1H14Q18 1 19 5L23 16Q24 19 20 19H10Q6 19 5 15L2 5Q1 1 6 1Z" fill="url(#cp)"/>
<rect x="8" y="14" width="17" height="9" rx="1" fill="#f8c820"/>
<text x="9.3" y="21.5" font-family="Liberation Sans" font-weight="bold" font-size="7.2" fill="#222">PRE</text>
</svg>

</body></html>
